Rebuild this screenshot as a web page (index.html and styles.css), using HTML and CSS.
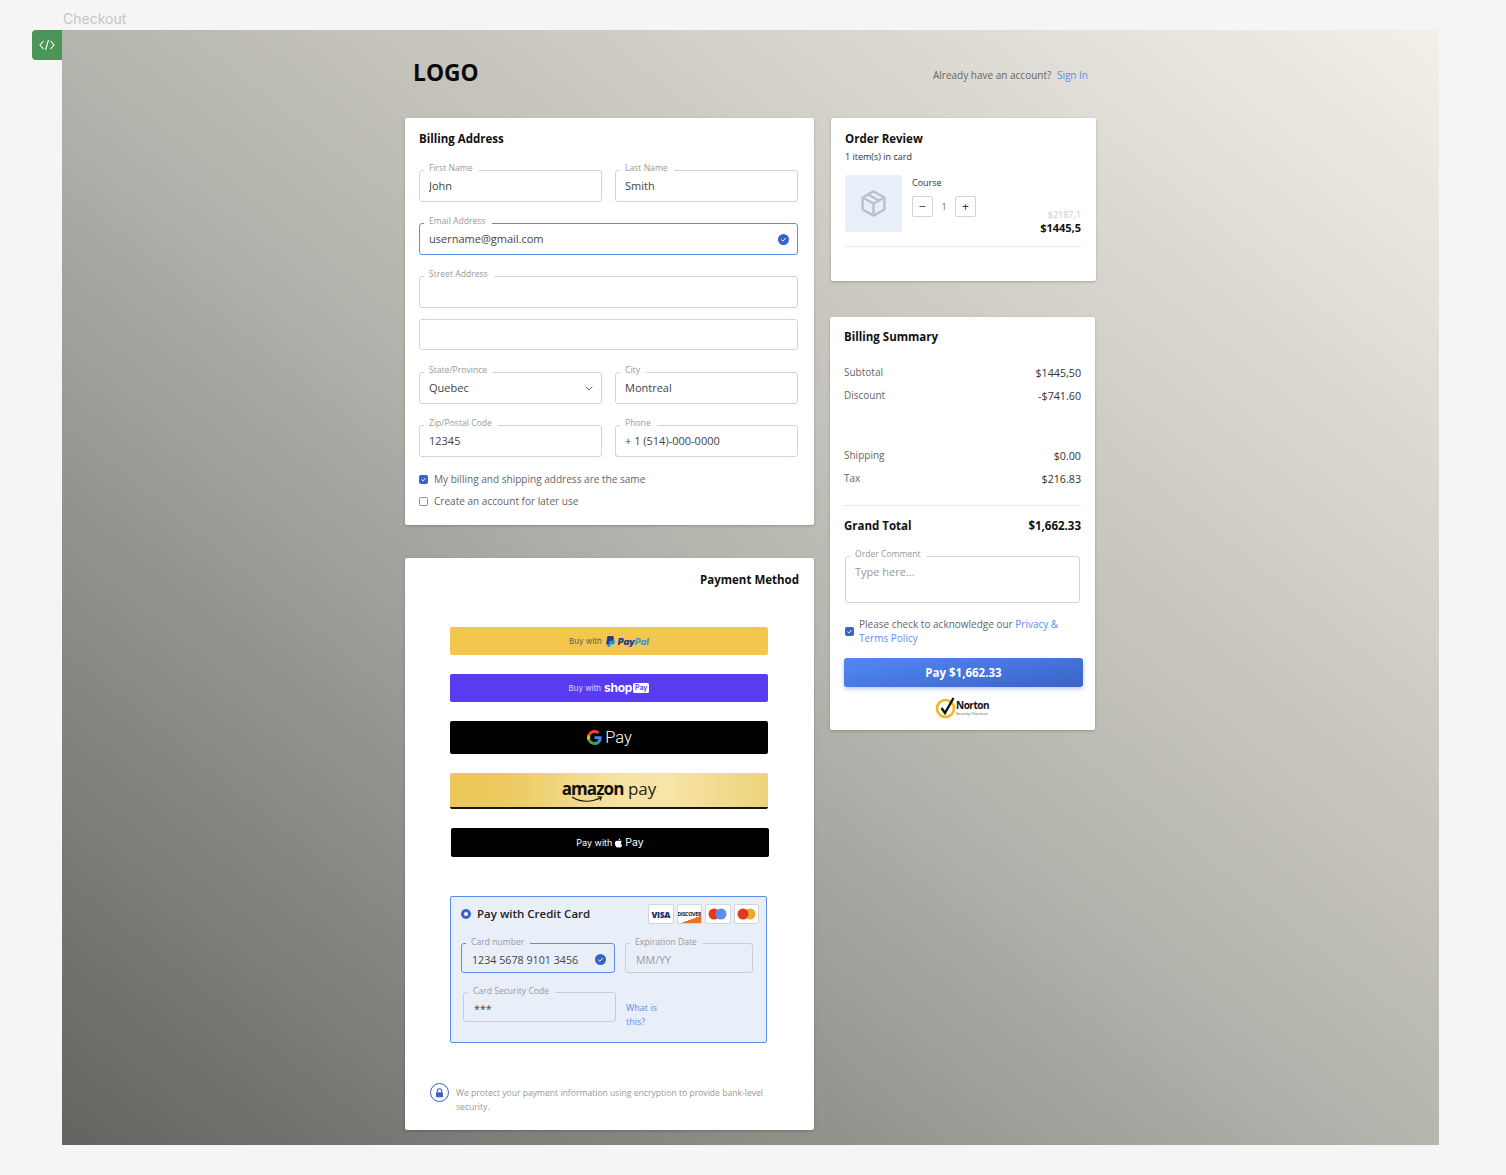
FILE: index.html
```html
<!DOCTYPE html>
<html lang="en">
<head>
    <meta charset="UTF-8">
    <meta name="viewport" content="width=device-width, initial-scale=1.0">
    <title>Checkout</title>
    <link rel="stylesheet" href="styles.css">
</head>
<body>
    <div class="page-title">Checkout</div>
    <div class="stage">
        <div class="code-tab">
            <svg width="16" height="12" viewBox="0 0 16 12" fill="none" stroke="#fff" stroke-width="1.1"><path d="M4.5 2 1 6l3.500 4M11.500 2 15 6l-3.500 4M9.500 1 6.500 11"/></svg>
        </div>
        <div class="frame">
            <div class="checkout">
                <header class="topbar">
                    <div class="logo">LOGO</div>
                    <div class="account">Already have an account? <a href="#">Sign In</a></div>
                </header>
                <div class="columns">
                    <div class="col-left">
                        <section class="card billing">
                            <h2>Billing Address</h2>
                            <div class="row row-first">
                                <div class="field"><span class="field-label">First Name</span><input type="text" value="John"></div>
                                <div class="field"><span class="field-label">Last Name</span><input type="text" value="Smith"></div>
                            </div>
                            <div class="row">
                                <div class="field field-wide field-active"><span class="field-label">Email Address</span><input type="text" value="username@gmail.com">
                                    <svg class="field-check" width="11" height="11" viewBox="0 0 11 11"><circle cx="5.500" cy="5.500" r="5.500" fill="#3b62c9"/><path d="M3.200 5.700 4.800 7.200 7.800 4" fill="none" stroke="#fff" stroke-width="1"/></svg>
                                </div>
                            </div>
                            <div class="row">
                                <div class="field field-wide"><span class="field-label">Street Address</span><input type="text"></div>
                            </div>
                            <div class="row row-tight">
                                <div class="field field-wide field-short"><input type="text"></div>
                            </div>
                            <div class="row row-state">
                                <div class="field"><span class="field-label">State/Province</span>
                                    <select><option>Quebec</option></select>
                                    <svg class="field-chevron" width="8" height="5" viewBox="0 0 8 5" fill="none" stroke="#555" stroke-width="0.9"><path d="M.7.7 4 4l3.300-3.300"/></svg>
                                </div>
                                <div class="field"><span class="field-label">City</span><input type="text" value="Montreal"></div>
                            </div>
                            <div class="row">
                                <div class="field"><span class="field-label">Zip/Postal Code</span><input type="text" value="12345"></div>
                                <div class="field"><span class="field-label">Phone</span><input type="text" value="+ 1 (514)-000-0000"></div>
                            </div>
                            <div class="check-row check-first">
                                <span class="box box-on"><svg width="9" height="9" viewBox="0 0 9 9" fill="none" stroke="#fff" stroke-width="0.9"><path d="M2.500 4.700 3.900 6 6.500 3"/></svg></span>
                                My billing and shipping address are the same
                            </div>
                            <div class="check-row">
                                <span class="box"></span>
                                Create an account for later use
                            </div>
                        </section>

                        <section class="card payment">
                            <h2 class="payment-title">Payment Method</h2>
                            <div class="pay-buttons">
                                <div class="pay-btn btn-paypal">
                                    <span>Buy with</span>
                                    <svg width="10" height="11" viewBox="0 0 20 22"><path d="M7 7h8c4 0 5.500 2.500 4.800 5.500C19 16 16.500 17 13.500 17H11l-1 5H5z" fill="#179bd7"/><path d="M5 0h8c4 0 5.500 2 4.800 5-.8 3.500-3.300 5-6.800 5H8.500l-1.200 7H2z" fill="#253b80"/></svg>
                                    <span class="paypal-word"><b>Pay</b><i>Pal</i></span>
                                </div>
                                <div class="pay-btn btn-shop">
                                    <span>Buy with</span>
                                    <span class="shop-word">shop</span>
                                    <span class="shop-badge">Pay</span>
                                </div>
                                <div class="pay-btn btn-google">
                                    <svg width="15" height="15" viewBox="0 0 48 48"><path fill="#EA4335" d="M24 9.500c3.540 0 6.710 1.220 9.210 3.600l6.850-6.850C35.900 2.380 30.470 0 24 0 14.620 0 6.510 5.380 2.560 13.220l7.980 6.190C12.430 13.720 17.740 9.500 24 9.500z"/><path fill="#4285F4" d="M46.980 24.550c0-1.570-.15-3.090-.38-4.550H24v9.020h12.940c-.58 2.960-2.260 5.480-4.780 7.180l7.730 6c4.510-4.180 7.090-10.360 7.090-17.650z"/><path fill="#FBBC05" d="M10.530 28.590c-.48-1.450-.76-2.990-.76-4.590s.27-3.140.76-4.590l-7.980-6.190C.92 16.460 0 20.120 0 24c0 3.880.92 7.540 2.560 10.780l7.970-6.190z"/><path fill="#34A853" d="M24 48c6.480 0 11.930-2.130 16.040-5.810l-7.730-6c-2.150 1.450-4.920 2.300-8.310 2.300-6.260 0-11.570-4.220-13.470-9.910l-7.980 6.190C6.510 42.620 14.620 48 24 48z"/></svg>
                                    <span class="google-word">Pay</span>
                                </div>
                                <div class="pay-btn btn-amazon">
                                    <div class="amazon-mark">
                                        <span class="amazon-word"><b>amazon</b> pay</span>
                                        <svg class="amazon-smile" width="32" height="7" viewBox="0 0 32 7" fill="none" stroke="#111" stroke-width="1.100"><path d="M1 1c8 5.500 20 5.500 29 .5"/><path d="M26.500.8 30.500 1 29 4.500"/></svg>
                                    </div>
                                </div>
                                <div class="pay-btn btn-apple">
                                    <span>Pay with</span>
                                    <svg width="9" height="10" viewBox="0 0 24 24" fill="#fff"><path d="M12.152 6.896c-.948 0-2.415-1.078-3.960-1.040-2.040.027-3.910 1.183-4.961 3.014-2.117 3.675-.546 9.103 1.519 12.090 1.013 1.454 2.208 3.090 3.792 3.039 1.520-.065 2.090-.987 3.935-.987 1.831 0 2.350.987 3.960.948 1.637-.026 2.676-1.480 3.676-2.948 1.156-1.688 1.636-3.325 1.662-3.415-.039-.013-3.182-1.221-3.220-4.857-.026-3.040 2.480-4.494 2.597-4.559-1.429-2.090-3.623-2.324-4.390-2.376-2-.156-3.675 1.090-4.610 1.090zM15.530 3.830c.843-1.012 1.400-2.427 1.245-3.830-1.207.052-2.662.805-3.532 1.818-.78.896-1.454 2.338-1.273 3.714 1.338.104 2.715-.688 3.559-1.701"/></svg>
                                    <span class="apple-word">Pay</span>
                                </div>
                            </div>

                            <div class="cc-panel">
                                <div class="cc-head">
                                    <span class="radio"></span>
                                    <span class="cc-title">Pay with Credit Card</span>
                                    <div class="cc-logos">
                                        <span class="cc-logo visa">VISA</span>
                                        <span class="cc-logo discover">DISCOVER</span>
                                        <span class="cc-logo">
                                            <svg width="19" height="12" viewBox="0 0 19 12"><circle cx="6" cy="6" r="5.500" fill="#e0391c"/><circle cx="13" cy="6" r="5.500" fill="#5b8def"/></svg>
                                        </span>
                                        <span class="cc-logo">
                                            <svg width="19" height="12" viewBox="0 0 19 12"><circle cx="13" cy="6" r="5.500" fill="#f0a62e"/><circle cx="6" cy="6" r="5.500" fill="#e0391c"/></svg>
                                        </span>
                                    </div>
                                </div>
                                <div class="cc-row">
                                    <div class="field field-cc field-active cc-number"><span class="field-label">Card number</span><input type="text" value="1234 5678 9101 3456">
                                        <svg class="field-check" width="11" height="11" viewBox="0 0 11 11"><circle cx="5.500" cy="5.500" r="5.500" fill="#3b62c9"/><path d="M3.200 5.700 4.800 7.200 7.800 4" fill="none" stroke="#fff" stroke-width="1"/></svg>
                                    </div>
                                    <div class="field field-cc cc-exp"><span class="field-label">Expiration Date</span><input type="text" placeholder="MM/YY"></div>
                                </div>
                                <div class="cc-row cc-row-two">
                                    <div class="field field-cc cc-code"><span class="field-label">Card Security Code</span><input type="text" value="***"></div>
                                    <a class="what-is" href="#">What is<br>this?</a>
                                </div>
                            </div>

                            <div class="secure">
                                <span class="secure-icon">
                                    <svg width="9" height="10" viewBox="0 0 9 10"><path d="M2.300 4.500V3a2.200 2.200 0 0 1 4.400 0v1.500" fill="none" stroke="#3b62c9" stroke-width="1.100"/><rect x="1" y="4.200" width="7" height="5" rx=".8" fill="#3b62c9"/></svg>
                                </span>
                                <p>We protect your payment information using encryption to provide bank-level security.</p>
                            </div>
                        </section>
                    </div>

                    <div class="col-right">
                        <section class="card review">
                            <h2>Order Review</h2>
                            <div class="review-count">1 item(s) in card</div>
                            <div class="review-item">
                                <div class="thumb">
                                    <svg width="29" height="29" viewBox="0 0 24 24" fill="none" stroke="#b9c1d1" stroke-width="2" stroke-linejoin="round"><path d="M12 2 21 7v10l-9 5-9-5V7z"/><path d="M3 7l9 5 9-5M12 12v10M7.500 4.500l9 5"/></svg>
                                </div>
                                <div class="item-info">
                                    <div class="item-name">Course</div>
                                    <div class="stepper">
                                        <button>−</button>
                                        <span>1</span>
                                        <button>+</button>
                                    </div>
                                </div>
                                <div class="item-prices">
                                    <div class="price-old">$2187,1</div>
                                    <div class="price-new">$1445,5</div>
                                </div>
                            </div>
                            <div class="review-line"></div>
                        </section>

                        <section class="card summary">
                            <h2>Billing Summary</h2>
                            <div class="sum-row sum-first"><span>Subtotal</span><span class="sum-value">$1445,50</span></div>
                            <div class="sum-row"><span>Discount</span><span class="sum-value">-$741.60</span></div>
                            <div class="sum-row sum-gap"><span>Shipping</span><span class="sum-value">$0.00</span></div>
                            <div class="sum-row"><span>Tax</span><span class="sum-value">$216.83</span></div>
                            <div class="sum-line"></div>
                            <div class="sum-total"><span>Grand Total</span><span>$1,662.33</span></div>
                            <div class="field field-comment"><span class="field-label">Order Comment</span><textarea placeholder="Type here..."></textarea></div>
                            <div class="ack">
                                <span class="box box-on"><svg width="9" height="9" viewBox="0 0 9 9" fill="none" stroke="#fff" stroke-width="0.9"><path d="M2.500 4.700 3.900 6 6.500 3"/></svg></span>
                                <span>Please check to acknowledge our <a href="#">Privacy &amp;</a><br><a href="#">Terms Policy</a></span>
                            </div>
                            <button class="pay-now">Pay $1,662.33</button>
                            <div class="norton">
                                <svg class="norton-mark" width="20" height="24" viewBox="0 0 20 24" fill="none"><circle cx="9.500" cy="13.500" r="8.500" stroke="#f2b824" stroke-width="2.600"/><path d="M5.500 13 9 18 17.500 3" stroke="#111" stroke-width="2.400"/></svg>
                                <div class="norton-text">
                                    <div class="norton-name">Norton</div>
                                    <div class="norton-sub">Security Checkout</div>
                                </div>
                            </div>
                        </section>
                    </div>
                </div>
            </div>
        </div>
    </div>
</body>
</html>
```

FILE: styles.css
```css
* {
    box-sizing: border-box;
}
body {
    margin: 0;
    background: #f5f5f5;
    font-family: "Open Sans", Arial, sans-serif;
    color: #222;
}
a {
    color: #5b8def;
    text-decoration: none;
}
h2 {
    margin: 0;
    height: 14px;
    font-size: 11.500px;
    line-height: 14px;
    font-weight: 700;
    color: #111;
}
.page-title {
    height: 30px;
    padding: 10px 0 0 63px;
    font-family: Inter, Arial, sans-serif;
    font-size: 14px;
    line-height: 17px;
    color: #c6c6c6;
}
.stage {
    display: flex;
    align-items: flex-start;
    margin-left: 32px;
}
.code-tab {
    width: 30px;
    height: 30px;
    display: flex;
    align-items: center;
    justify-content: center;
    background: #4a9558;
    border-radius: 4px 0 0 4px;
}
.frame {
    width: 1377px;
    height: 1115px;
    background: linear-gradient(to top right, #646360, #b6b5ae 50%, #f3f0e8);
}
.checkout {
    width: 691px;
    margin-left: 343px;
}
.topbar {
    height: 88px;
    display: flex;
    justify-content: space-between;
    align-items: flex-start;
    padding: 0 8px;
}
.logo {
    margin-top: 27px;
    font-size: 22.800px;
    line-height: 32px;
    font-weight: 700;
    color: #0a0a0a;
}
.account {
    margin-top: 38px;
    font-size: 10px;
    line-height: 14px;
    color: #666;
}
.account a {
    margin-left: 3px;
}
.columns {
    display: flex;
    gap: 17px;
}
.col-left {
    width: 409px;
}
.col-right {
    width: 265px;
}
.card {
    background: #fff;
    border-radius: 2px;
    box-shadow: 0 1px 3px rgba(0, 0, 0, 0.22);
}

/* billing address */
.billing {
    padding: 14px 16px 17px 14px;
}
.row {
    display: flex;
    gap: 13px;
    margin-top: 21px;
}
.row-first {
    margin-top: 24px;
}
.row-tight {
    margin-top: 11px;
}
.row-state {
    margin-top: 22px;
}
.field {
    position: relative;
    width: 183px;
    height: 32px;
    border: 1px solid #cfd4e0;
    border-radius: 3px;
    background: #fff;
}
.field-wide {
    width: 379px;
}
.field-short {
    height: 31px;
}
.field-active {
    border-color: #5b8def;
}
.field-label {
    position: absolute;
    top: -8px;
    left: 4px;
    padding: 0 6px 0 5px;
    height: 11px;
    background: #fff;
    font-size: 8.600px;
    line-height: 11px;
    color: #999;
    white-space: nowrap;
}
.field input, .field select, .field textarea {
    display: block;
    width: 100%;
    height: 100%;
    border: none;
    outline: none;
    background: transparent;
    padding: 0 9px 2px;
    font-family: "Open Sans", Arial, sans-serif;
    font-size: 11px;
    color: #444;
    appearance: none;
}
.field input::placeholder, .field textarea::placeholder {
    color: #999;
    opacity: 1;
}
.field-check {
    position: absolute;
    top: 10px;
    right: 8px;
}
.field-chevron {
    position: absolute;
    top: 13px;
    right: 8px;
}
.check-row {
    display: flex;
    align-items: center;
    gap: 6px;
    margin-top: 8px;
    height: 14px;
    font-size: 10.050px;
    color: #666;
}
.check-first {
    margin-top: 15px;
}
.box {
    flex: none;
    width: 9px;
    height: 9px;
    border: 1px solid #8a8f99;
    border-radius: 1.500px;
    background: #fff;
    display: block;
    position: relative;
}
.box svg {
    display: block;
    margin: -1px;
}
.box-on {
    border-color: #3b62c9;
    background: #3b62c9;
}

/* payment */
.payment {
    margin-top: 33px;
    padding: 15px 0 16px;
}
.payment-title {
    text-align: right;
    padding-right: 15px;
}
.pay-buttons {
    display: flex;
    flex-direction: column;
    gap: 19px;
    margin: 40px 0 0 45px;
    width: 319px;
}
.pay-btn {
    width: 318px;
    display: flex;
    align-items: center;
    justify-content: center;
    gap: 3px;
    border-radius: 2px;
    font-family: Inter, Arial, sans-serif;
    font-size: 8px;
}
.btn-paypal {
    height: 28px;
    background: #f3c74c;
    color: #5a5a5a;
}
.paypal-word {
    font-size: 9px;
    font-style: italic;
    font-weight: 800;
}
.paypal-word b {
    color: #253b80;
}
.paypal-word i {
    color: #3f95cc;
}
.btn-shop {
    height: 28px;
    background: #5a3bf0;
    color: #ddd8fd;
}
.shop-word {
    font-size: 12px;
    font-weight: 700;
    letter-spacing: -0.300px;
    color: #fff;
    line-height: 12px;
    margin-top: -1px;
}
.shop-badge {
    margin-left: -2px;
    padding: 0 2px;
    background: #fff;
    border-radius: 1.500px;
    color: #5a3bf0;
    font-size: 7px;
    font-weight: 600;
    line-height: 10px;
}
.btn-google {
    height: 33px;
    padding: 0 0 1px 1px;
    background: #000;
}
.google-word {
    font-family: Roboto, Arial, sans-serif;
    font-size: 16.500px;
    font-weight: 300;
    color: #fff;
}
.btn-amazon {
    height: 36px;
    background: linear-gradient(90deg, #ecc858 0%, #ecca5e 18%, #f6e2a2 52%, #f7e4a8 68%, #eed27a 100%);
    border-bottom: 2px solid #141414;
}
.amazon-mark {
    position: relative;
    padding: 2px 0 5px;
}
.amazon-word {
    font-family: "Open Sans", Arial, sans-serif;
    font-size: 17px;
    line-height: 22px;
    color: #222;
}
.amazon-word b {
    color: #111;
    font-size: 17px;
    font-weight: 700;
    letter-spacing: -0.900px;
}
.amazon-smile {
    position: absolute;
    left: 9px;
    top: 20px;
}
.btn-apple {
    height: 29px;
    margin-left: 1px;
    gap: 2px;
    background: #000;
    color: #fff;
    font-size: 9px;
}
.apple-word {
    font-size: 10.500px;
}

/* credit card panel */
.cc-panel {
    width: 317px;
    margin: 39px 0 0 45px;
    padding: 7px 7px 20px 10px;
    border: 1px solid #5b8def;
    border-radius: 2px;
    background: #e9eff9;
}
.cc-head {
    display: flex;
    align-items: center;
    height: 20px;
}
.radio {
    width: 10px;
    height: 10px;
    border-radius: 50%;
    background: #fff;
    border: 3px solid #3b62c9;
}
.cc-title {
    margin-left: 6px;
    padding-bottom: 2px;
    font-size: 11.500px;
    font-weight: 600;
    color: #222;
}
.cc-logos {
    margin-left: auto;
    display: flex;
    gap: 3px;
}
.cc-logo {
    width: 25.500px;
    height: 20px;
    display: flex;
    align-items: center;
    justify-content: center;
    background: #fff;
    border: 1px solid #cfd4e0;
    border-radius: 2px;
    overflow: hidden;
}
.visa {
    font-size: 8.500px;
    font-weight: 800;
    letter-spacing: -0.300px;
    color: #1f2a6b;
}
.discover {
    font-size: 5.500px;
    font-weight: 700;
    letter-spacing: -0.400px;
    color: #222;
    background: linear-gradient(160deg, #fff 72%, #e8742a 73%);
}
.cc-row {
    display: flex;
    gap: 10px;
    margin-top: 19px;
}
.cc-row-two {
    height: 30px;
    margin-left: 2px;
    margin-top: 19px;
}
.field-cc {
    height: 30px;
    background: #e9eff9;
    border-color: #c6cede;
}
.field-cc.field-active {
    border-color: #5b8def;
}
.field-cc .field-label {
    top: -7px;
    background: #e9eff9;
}
.field-cc input {
    padding: 3px 10px 0;
    font-size: 10.700px;
}
.cc-number {
    width: 154px;
}
.cc-exp {
    width: 128px;
}
.cc-code {
    width: 153px;
}
.what-is {
    margin-top: 9px;
    font-size: 9px;
    line-height: 14px;
}
.secure {
    display: flex;
    align-items: flex-start;
    gap: 7px;
    margin: 40px 0 0 25px;
    width: 340px;
}
.secure-icon {
    flex: none;
    width: 19px;
    height: 19px;
    display: flex;
    align-items: center;
    justify-content: center;
    border: 1px solid #3b62c9;
    border-radius: 50%;
}
.secure p {
    margin: 3px 0 0;
    font-size: 8.600px;
    line-height: 14px;
    color: #999;
}

/* order review */
.review {
    height: 163px;
    padding: 14px 15px 0 14px;
}
.review-count {
    margin-top: 5px;
    font-size: 9px;
    line-height: 12px;
    color: #333;
}
.review-item {
    display: flex;
    height: 57px;
    margin-top: 12px;
}
.thumb {
    width: 57px;
    height: 57px;
    display: flex;
    align-items: center;
    justify-content: center;
    background: #e9eff9;
    border-radius: 2px;
}
.item-info {
    margin-left: 10px;
}
.item-name {
    padding-top: 1px;
    height: 14px;
    font-size: 9px;
    line-height: 14px;
    color: #333;
}
.stepper {
    display: flex;
    align-items: center;
    margin-top: 7px;
    font-size: 9px;
    color: #666;
}
.stepper span {
    width: 22px;
    text-align: center;
}
.stepper button {
    width: 21px;
    height: 21px;
    padding: 0;
    border: 1px solid #cfd4e0;
    border-radius: 2px;
    background: #fff;
    font-family: "Open Sans", Arial, sans-serif;
    font-size: 12px;
    color: #333;
}
.item-prices {
    margin-left: auto;
    padding-top: 34px;
    text-align: right;
}
.price-old {
    font-size: 9px;
    line-height: 12px;
    color: #c8ccd6;
}
.price-new {
    font-size: 11px;
    line-height: 14px;
    font-weight: 700;
    color: #111;
}
.review-line {
    margin-top: 14px;
    height: 1px;
    background: #e6e8ee;
}

/* billing summary */
.summary {
    width: 265px;
    margin: 36px 0 0 -1px;
    padding: 13px 14px 11px;
}
.sum-row {
    display: flex;
    justify-content: space-between;
    margin-top: 9px;
    font-size: 10px;
    line-height: 14px;
    color: #666;
}
.sum-first {
    margin-top: 21px;
}
.sum-gap {
    margin-top: 46px;
}
.sum-value {
    margin: 1px 0 -1px;
    font-size: 10.700px;
    color: #333;
}
.sum-line {
    height: 1px;
    margin-top: 20px;
    background: #e6e8ee;
}
.sum-total {
    display: flex;
    justify-content: space-between;
    margin-top: 13px;
    font-size: 11.500px;
    line-height: 14px;
    font-weight: 700;
    color: #111;
}
.field-comment {
    width: 235px;
    height: 47px;
    margin: 23px 0 0 1px;
}
.field-comment textarea {
    padding-top: 7px;
    resize: none;
}
.ack {
    display: flex;
    align-items: center;
    gap: 5px;
    margin: 14px 0 0 1px;
    font-size: 10px;
    line-height: 14px;
    color: #666;
}
.pay-now {
    display: block;
    width: 239px;
    height: 29px;
    margin-top: 13px;
    border: none;
    border-radius: 3px;
    background: linear-gradient(170deg, #5289f6, #3a63c6);
    box-shadow: 0 2px 4px rgba(59, 98, 201, 0.35);
    color: #fff;
    font-family: "Open Sans", Arial, sans-serif;
    font-size: 11.500px;
    font-weight: 700;
}
.norton {
    display: flex;
    justify-content: center;
    align-items: center;
    margin-top: 8px;
    height: 24px;
}
.norton-mark {
    overflow: visible;
}
.norton-text {
    margin-top: 2px;
}
.norton-name {
    font-size: 10px;
    line-height: 11px;
    font-weight: 700;
    letter-spacing: -0.500px;
    color: #111;
}
.norton-sub {
    font-size: 3.800px;
    line-height: 6px;
    color: #555;
}
```
